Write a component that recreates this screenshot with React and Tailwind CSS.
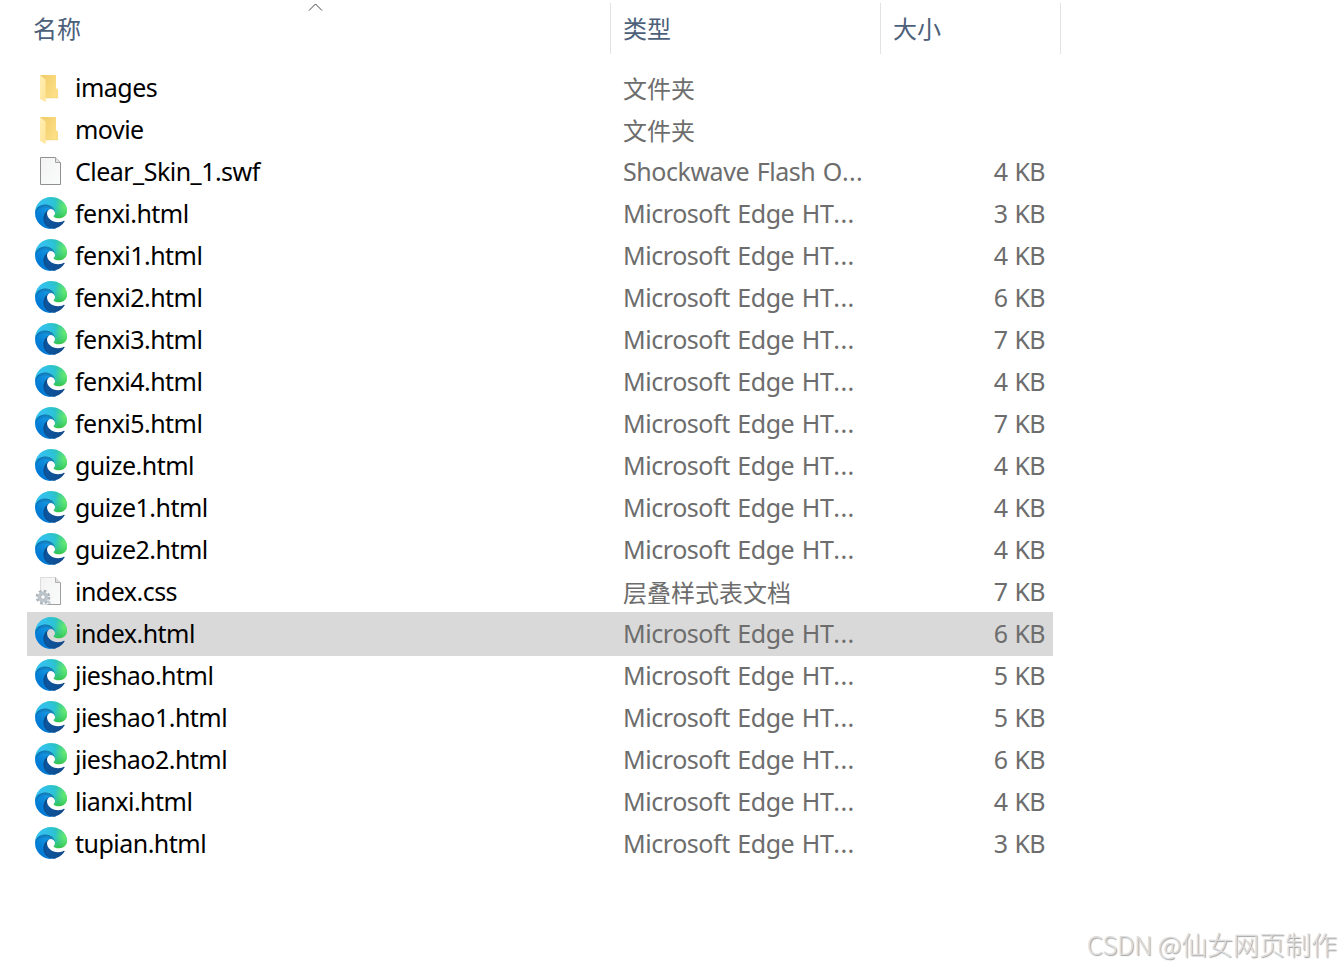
import { clsx } from "clsx";

const HTML = "Microsoft Edge HT...";

const FILES = [
  { name: "images", icon: "folder", type: "文件夹" },
  { name: "movie", icon: "folder", type: "文件夹" },
  { name: "Clear_Skin_1.swf", icon: "file", type: "Shockwave Flash O...", size: "4 KB" },
  { name: "fenxi.html", icon: "edge", type: HTML, size: "3 KB" },
  { name: "fenxi1.html", icon: "edge", type: HTML, size: "4 KB" },
  { name: "fenxi2.html", icon: "edge", type: HTML, size: "6 KB" },
  { name: "fenxi3.html", icon: "edge", type: HTML, size: "7 KB" },
  { name: "fenxi4.html", icon: "edge", type: HTML, size: "4 KB" },
  { name: "fenxi5.html", icon: "edge", type: HTML, size: "7 KB" },
  { name: "guize.html", icon: "edge", type: HTML, size: "4 KB" },
  { name: "guize1.html", icon: "edge", type: HTML, size: "4 KB" },
  { name: "guize2.html", icon: "edge", type: HTML, size: "4 KB" },
  { name: "index.css", icon: "css", type: "层叠样式表文档", size: "7 KB" },
  { name: "index.html", icon: "edge", type: HTML, size: "6 KB", selected: true },
  { name: "jieshao.html", icon: "edge", type: HTML, size: "5 KB" },
  { name: "jieshao1.html", icon: "edge", type: HTML, size: "5 KB" },
  { name: "jieshao2.html", icon: "edge", type: HTML, size: "6 KB" },
  { name: "lianxi.html", icon: "edge", type: HTML, size: "4 KB" },
  { name: "tupian.html", icon: "edge", type: HTML, size: "3 KB" },
];

const EDGE_DARK = "M231.07 190.54c-3.41 1.79-6.93 3.36-10.54 4.71a101.9 101.9 0 0 1-35.9 6.46c-47.32 0-88.54-32.55-88.54-74.31a31.5 31.5 0 0 1 16.43-27.31c-42.8 1.8-53.8 46.4-53.8 72.53 0 73.88 68.09 81.37 82.76 81.37 7.91 0 19.84-2.3 27-4.56l1.31-.44a128.3 128.3 0 0 0 66.6-52.8 4 4 0 0 0-5.32-5.65Z";
const EDGE_BLUE = "M105.73 241.42a79.2 79.2 0 0 1-22.74-21.34 80.72 80.72 0 0 1 29.53-119.99c3.12-1.47 8.45-4.13 15.54-4a32.35 32.35 0 0 1 25.69 13 31.9 31.9 0 0 1 6.36 18.66c0-.21 24.46-79.6-80-79.6-43.9 0-80 41.66-80 78.21a130.15 130.15 0 0 0 12.11 56 128 128 0 0 0 156.38 67.11 75.55 75.55 0 0 1-62.78-8Z";
const EDGE_GREEN = "M152.33 148.86c-.81 1.05-3.3 2.5-3.3 5.66 0 2.61 1.7 5.12 4.72 7.23 14.38 10 41.49 8.68 41.56 8.68a59.56 59.56 0 0 0 30.27-8.35A61.38 61.38 0 0 0 256 109.19c.26-22.41-8-37.31-11.34-43.91C223.46 23.84 177.72 0 128 0A128 128 0 0 0 0 126.2c.48-36.54 36.8-66.05 80-66.05 3.5 0 23.46.34 42 10.07 16.34 8.58 24.9 18.94 30.85 29.21 6.18 10.67 7.28 24.15 7.28 29.52 0 5.37-2.74 13.33-7.8 19.91Z";

// Gradients shared by every row icon
function IconDefs() {
  return (
    <svg className="absolute size-0" aria-hidden="true">
      <defs>
        <linearGradient id="edge-dark" gradientUnits="userSpaceOnUse" x1="58" y1="177" x2="237" y2="177">
          <stop offset="0" stopColor="#0c59a4" />
          <stop offset="1" stopColor="#114a8b" />
        </linearGradient>
        <radialGradient id="edge-dark-shade" gradientUnits="userSpaceOnUse" cx="157.2" cy="68.91" r="95.38" gradientTransform="matrix(1 0 0 -.95 0 243.92)">
          <stop offset="0.72" stopOpacity="0" />
          <stop offset="0.95" stopOpacity="0.53" />
          <stop offset="1" />
        </radialGradient>
        <linearGradient id="edge-blue" gradientUnits="userSpaceOnUse" x1="153" y1="100" x2="41" y2="221">
          <stop offset="0" stopColor="#1b9de2" />
          <stop offset="0.16" stopColor="#1595df" />
          <stop offset="0.67" stopColor="#0680d7" />
          <stop offset="1" stopColor="#0078d4" />
        </linearGradient>
        <radialGradient id="edge-blue-shade" gradientUnits="userSpaceOnUse" cx="-340.29" cy="62.99" r="143.24" gradientTransform="matrix(.15 -.99 -.8 -.12 172.01 -130.32)">
          <stop offset="0.76" stopOpacity="0" />
          <stop offset="0.95" stopOpacity="0.5" />
          <stop offset="1" />
        </radialGradient>
        <radialGradient id="edge-green" gradientUnits="userSpaceOnUse" cx="113.37" cy="570.21" r="202.43" gradientTransform="matrix(-.04 1 2.13 .08 -1184.17 -111.61)">
          <stop offset="0" stopColor="#35c1f1" />
          <stop offset="0.11" stopColor="#34c1ed" />
          <stop offset="0.23" stopColor="#2fc2df" />
          <stop offset="0.31" stopColor="#2bc3d2" />
          <stop offset="0.67" stopColor="#36c752" />
        </radialGradient>
        <radialGradient id="edge-lime" gradientUnits="userSpaceOnUse" cx="376.52" cy="567.97" r="97.34" gradientTransform="matrix(.28 .96 .78 -.23 -308.39 -153.42)">
          <stop offset="0" stopColor="#66eb6e" />
          <stop offset="1" stopColor="#66eb6e" stopOpacity="0" />
        </radialGradient>
        <linearGradient id="folder-front" x1="0" y1="0" x2="1" y2="1">
          <stop offset="0" stopColor="#ffefb5" />
          <stop offset="1" stopColor="#ffe394" />
        </linearGradient>
        <linearGradient id="folder-back" x1="0" y1="0" x2="1" y2="0.6">
          <stop offset="0" stopColor="#efca68" />
          <stop offset="1" stopColor="#fddf86" />
        </linearGradient>
        <linearGradient id="paper" x1="0" y1="0" x2="1" y2="1">
          <stop offset="0" stopColor="#f3f3f3" />
          <stop offset="1" stopColor="#fafbfb" />
        </linearGradient>
      </defs>
    </svg>
  );
}

function EdgeIcon() {
  return (
    <svg viewBox="0 0 256 256" className="mb-0.5 size-8">
      <path fill="url(#edge-dark)" d={EDGE_DARK} />
      <path fill="url(#edge-dark-shade)" opacity="0.35" d={EDGE_DARK} />
      <path fill="url(#edge-blue)" d={EDGE_BLUE} />
      <path fill="url(#edge-blue-shade)" opacity="0.41" d={EDGE_BLUE} />
      <path fill="url(#edge-green)" d={EDGE_GREEN} />
      <path fill="url(#edge-lime)" d={EDGE_GREEN} />
    </svg>
  );
}

function FolderIcon() {
  return (
    <svg viewBox="0 0 32 32" className="size-8">
      <path d="M5 3h16v13l2 2v8H5Z" fill="url(#folder-back)" />
      <path d="M21 16.5 23 18v8h-2Z" fill="#fbdc82" />
      <path d="m5 3 5.7 4.5V30L5 27Z" fill="url(#folder-front)" />
      <path d="M10.7 25.5h13.3l-1.5.8H10.7Z" fill="#f3d67f" />
    </svg>
  );
}

function FileIcon() {
  return (
    <svg viewBox="0 0 32 32" className="mb-0.5 size-8">
      <path d="M5.5 2.5h15l5 5v22h-20Z" fill="url(#paper)" stroke="#909090" />
      <path d="M20.5 2.5v5h5" fill="#e6e6e6" stroke="#a3a3a3" />
    </svg>
  );
}

function CssIcon() {
  return (
    <svg viewBox="0 0 32 32" className="mb-0.5 size-8">
      <path d="M5.5 2.5h15l5 5v22h-20Z" fill="url(#paper)" stroke="#dcdcdc" />
      <path d="M25.5 7.5v22h-13" fill="none" stroke="#a0a0a0" />
      <path d="M20.5 2.5v5h5" fill="#dedede" stroke="#b0b0b0" />
      <circle cx="8" cy="22" r="5.8" fill="none" stroke="#a9b2ba" strokeWidth="3" strokeDasharray="2.5 2.055" />
      <circle cx="8" cy="22" r="4" fill="#f4f5f6" stroke="#bcc5cc" strokeWidth="2.8" />
      <circle cx="8" cy="22" r="2.4" fill="#fafafa" stroke="#8f979e" strokeWidth="0.7" />
      <path d="m12 26 1-1 2 1.5 1 2-2 1Z" fill="#c4ccd2" />
    </svg>
  );
}

const ICONS = { edge: EdgeIcon, folder: FolderIcon, file: FileIcon, css: CssIcon };

function Header() {
  return (
    <div className="flex h-[67px] items-start pt-[3px] text-[#4c607a]">
      <div className="relative flex h-[51px] w-[583px] items-center pl-[6px] pt-px">
        名称
        <svg viewBox="0 0 15 8" className="absolute left-[281px] top-0 h-2 w-[15px]" fill="none" stroke="#444">
          <path d="m1 7.5 6.5-6.5 6.5 6.5" />
        </svg>
      </div>
      <div className="flex h-[51px] w-[270px] items-center border-l border-[#e2e2e2] pl-3 pt-px">类型</div>
      <div className="flex h-[51px] w-[181px] items-center border-x border-[#e2e2e2] pl-3 pt-px">大小</div>
    </div>
  );
}

function FileType({ type }) {
  if (!type.endsWith("...")) {
    return <div className="w-[270px] pt-0.5 text-[#6d6d6d]">{type}</div>;
  }
  return (
    <div className="w-[270px] pb-0.5 text-[25px] leading-8 tracking-[-0.45px] text-[#6d6d6d] [word-spacing:1.5px]">
      {type.slice(0, -3)}
      <span className="tracking-[0.4px]">...</span>
    </div>
  );
}

function FileRow({ file }) {
  const Icon = ICONS[file.icon];
  return (
    <div
      className={clsx(
        "flex h-[42px] w-[1026px] items-center whitespace-nowrap",
        file.selected && "bg-[#d9d9d9] shadow-[0_1px_0_#d9d9d9,0_-1px_0_#d9d9d9]"
      )}
    >
      <div className="flex w-[596px] items-center pl-2">
        <Icon />
        <span className="ml-2 pb-0.5 text-[25px] leading-8 tracking-[-0.52px] text-black">{file.name}</span>
      </div>
      <FileType type={file.type} />
      <div className="flex-1 pb-0.5 pr-2 text-right text-[25px] leading-8 tracking-[-0.6px] text-[#6d6d6d] [word-spacing:1px]">
        {file.size}
      </div>
    </div>
  );
}

export default function App() {
  return (
    <div className="relative flex h-[967px] w-[1341px] flex-col overflow-hidden bg-white pl-[27px] font-['Noto_Sans','Noto_Sans_CJK_SC',sans-serif] text-[24px] leading-8">
      <IconDefs />
      <Header />
      {FILES.map((f) => (
        <FileRow key={f.name} file={f} />
      ))}
      <div className="absolute bottom-[7px] right-1 whitespace-nowrap font-['Noto_Sans_CJK_SC',sans-serif] text-[26px] font-light text-[#dedede] [text-shadow:1px_1px_1px_#a0a0a0]">
        <span className="tracking-[-0.3px]">CSDN @</span>仙女网页制作
      </div>
    </div>
  );
}
